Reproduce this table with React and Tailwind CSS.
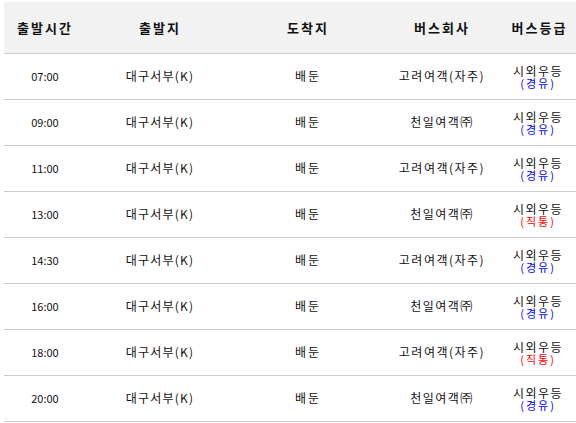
import React from "react";

const rows = [
  { time: "07:00", company: "고려여객(자주)", type: "경유" },
  { time: "09:00", company: "천일여객㈜", type: "경유" },
  { time: "11:00", company: "고려여객(자주)", type: "경유" },
  { time: "13:00", company: "천일여객㈜", type: "직통" },
  { time: "14:30", company: "고려여객(자주)", type: "경유" },
  { time: "16:00", company: "천일여객㈜", type: "경유" },
  { time: "18:00", company: "고려여객(자주)", type: "직통" },
  { time: "20:00", company: "천일여객㈜", type: "경유" },
];

export default function App() {
  return (
    <div
      className="w-[576px] h-[423px] overflow-hidden bg-white pt-[2px] pl-1 text-[#111]"
      style={{ fontFamily: '"Noto Sans CJK KR", "Noto Sans", sans-serif' }}
    >
      <table className="table-fixed border-collapse w-[576px]">
        <colgroup>
          <col className="w-[82px]" />
          <col className="w-[148px]" />
          <col className="w-[148px]" />
          <col className="w-[120px]" />
          <col className="w-[78px]" />
        </colgroup>
        <thead className="bg-[#f2f2f2]">
          <tr className="h-[51px] border-b border-[#cccccc]">
            <th className="text-[13px] font-bold text-center tracking-[2px]">출발시간</th>
            <th className="text-[13px] font-bold text-center tracking-[2px]">출발지</th>
            <th className="text-[13px] font-bold text-center tracking-[2px]">도착지</th>
            <th className="text-[13px] font-bold text-center tracking-[2px]">버스회사</th>
            <th className="text-[13px] font-bold text-center tracking-[2px] pr-[3px]">버스등급</th>
          </tr>
        </thead>
        <tbody>
          {rows.map((row) => (
            <tr key={row.time} className="h-[46px] border-b border-[#cccccc]">
              <td className="text-center text-[11px]">{row.time}</td>
              <td className="text-center text-[12px] tracking-[1.2px]">대구서부(K)</td>
              <td className="text-center text-[12px] tracking-[2px]">배둔</td>
              <td className="text-center text-[12px] tracking-[1.5px]">{row.company}</td>
              <td className="text-center pr-[6px] pt-[2px]">
                <div className="text-[12px] leading-[12px] tracking-[1.5px]">시외우등</div>
                <div
                  className={
                    row.type === "직통"
                      ? "text-[11px] leading-[12px] text-[#ff0000] tracking-[2px]"
                      : "text-[11px] leading-[12px] text-[#0000ff] tracking-[2px]"
                  }
                >
                  ({row.type})
                </div>
              </td>
            </tr>
          ))}
        </tbody>
      </table>
    </div>
  );
}
